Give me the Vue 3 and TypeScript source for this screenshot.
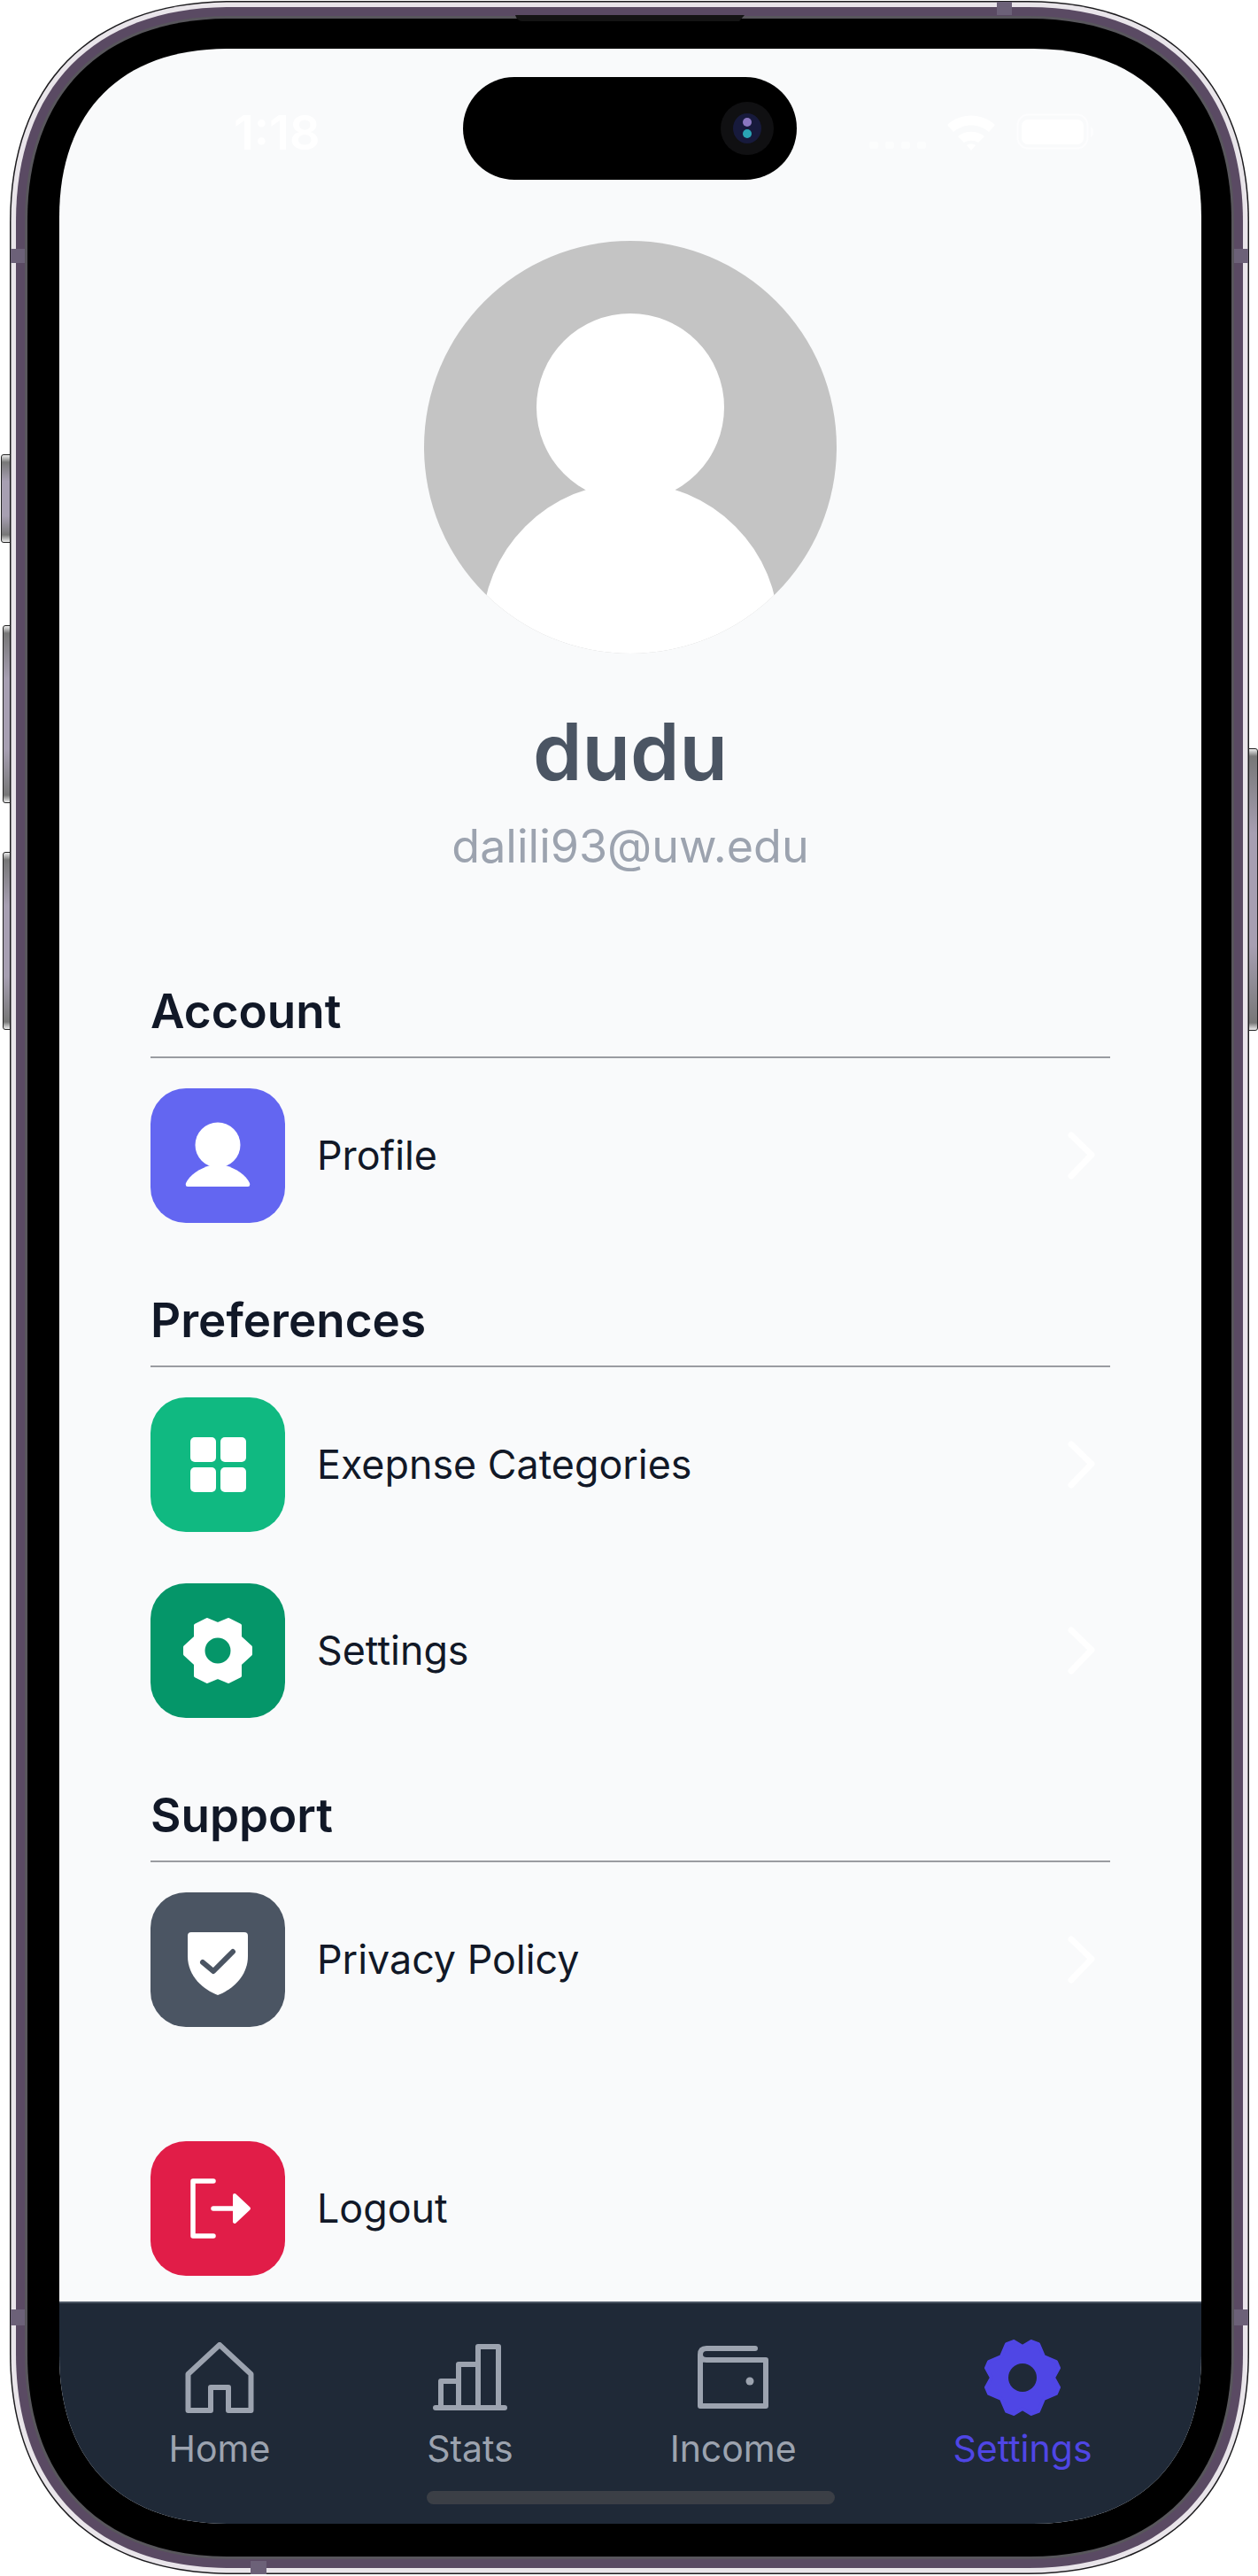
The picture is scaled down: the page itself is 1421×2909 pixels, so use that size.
<script setup lang="ts">
// corner with a continuous curve, e = how far the corner reaches along each edge
function squircle(x: number, y: number, w: number, h: number, e: number): string {
  const c = e * 0.37
  const r = x + w
  const b = y + h
  return [
    `M${x + e} ${y}`,
    `H${r - e}`,
    `C${r - c} ${y} ${r} ${y + c} ${r} ${y + e}`,
    `V${b - e}`,
    `C${r} ${b - c} ${r - c} ${b} ${r - e} ${b}`,
    `H${x + e}`,
    `C${x + c} ${b} ${x} ${b - c} ${x} ${b - e}`,
    `V${y + e}`,
    `C${x} ${y + c} ${x + c} ${y} ${x + e} ${y}`,
    'Z'
  ].join(' ')
}

function ring(inset: number): string {
  return squircle(11 + inset, 1 + inset, 1400 - inset * 2, 2906 - inset * 2, 250 - inset * 1.09)
}

const rings = [
  { inset: 0, fill: '#1b1a1d' },
  { inset: 1.5, fill: '#e9e5ea' },
  { inset: 7, fill: '#5a4a63' },
  { inset: 17, fill: '#58565c' },
  { inset: 20, fill: '#000000' }
]

const bands = [
  { x: 1126, y: 2, w: 17, h: 15 },
  { x: 12, y: 281, w: 16, h: 16 },
  { x: 1394, y: 281, w: 16, h: 16 },
  { x: 283, y: 2892, w: 18, h: 15 },
  { x: 12, y: 2608, w: 16, h: 18 },
  { x: 1394, y: 2608, w: 16, h: 18 }
]

const screenClip = { clipPath: `path('${squircle(0, 0, 1290, 2795, 190)}')` }
</script>

<template>
  <div class="device">
    <span class="side-btn action"></span>
    <span class="side-btn vol-up"></span>
    <span class="side-btn vol-down"></span>
    <span class="side-btn power"></span>

    <svg class="frame" width="1421" height="2909" viewBox="0 0 1421 2909">
      <path v-for="r in rings" :key="r.inset" :d="ring(r.inset)" :fill="r.fill" />
      <rect v-for="b in bands" :key="b.x + '-' + b.y" :x="b.x" :y="b.y" :width="b.w" :height="b.h" fill="#6c6178" />
      <path d="M582 17H841L835 24H590Q584 24 582 17Z" fill="#141414" />
    </svg>

    <div class="screen" :style="screenClip">
      <div class="status-bar">
        <span class="time">1:18</span>
        <div class="status-icons">
          <svg class="cells" width="64" height="42" viewBox="0 0 64 42" fill="#fcfdfd">
            <rect x="0" y="32" width="10" height="8" rx="3" />
            <rect x="18" y="32" width="10" height="8" rx="3" />
            <rect x="36" y="32" width="10" height="8" rx="3" />
            <rect x="54" y="32" width="10" height="8" rx="3" />
          </svg>
          <svg class="wifi" width="58" height="42" viewBox="0 0 58 42">
            <path d="M2 13C17 -1 41 -1 56 13L49 21C38 11 20 11 9 21Z" fill="#fff" />
            <path d="M14 26C22 19 36 19 44 26L37 33C33 30 25 30 21 33Z" fill="#fff" />
            <path d="M24 36C27 34 31 34 34 36L29 42Z" fill="#fff" />
          </svg>
          <svg class="battery" width="88" height="42" viewBox="0 0 88 42">
            <rect x="1.5" y="1.5" width="79" height="38" rx="12" fill="none" stroke="#fdfdfe" stroke-width="2" />
            <rect x="6" y="7" width="70" height="28" rx="7" fill="#fff" />
            <path d="M84 15Q87 17 87 21Q87 25 84 27Z" fill="#fdfdfe" />
          </svg>
        </div>
      </div>

      <div class="island">
        <span class="lens">
          <span class="lens-inner">
            <i class="dot top"></i>
            <i class="dot low"></i>
          </span>
        </span>
      </div>

      <main class="content">
        <section class="hero">
          <svg class="avatar" width="466" height="466" viewBox="0 0 466 466">
            <defs>
              <clipPath id="avatar-clip"><circle cx="233" cy="233" r="233" /></clipPath>
            </defs>
            <g clip-path="url(#avatar-clip)">
              <rect width="466" height="466" fill="#c4c4c4" />
              <circle cx="233" cy="188" r="106" fill="#fff" />
              <circle cx="233" cy="441" r="167.700" fill="#fff" />
            </g>
          </svg>
          <h1 class="name">dudu</h1>
          <p class="email">dalili93@uw.edu</p>
        </section>

        <section class="group">
          <h2 class="group-title">Account</h2>
          <div class="row">
            <span class="tile indigo">
              <svg viewBox="0 0 152 152" width="152" height="152">
                <circle cx="76" cy="64" r="25.5" fill="#fff" />
                <path d="M40 107C44 98 56 90 68 87H84C96 90 108 98 112 107Q113 111 110 111H42Q39 111 40 107Z" fill="#fff" />
              </svg>
            </span>
            <span class="label">Profile</span>
            <svg class="chevron" width="34" height="60" viewBox="0 0 34 60"><path d="M6 7L29 29L6 53" /></svg>
          </div>
        </section>

        <section class="group">
          <h2 class="group-title">Preferences</h2>
          <div class="row">
            <span class="tile emerald">
              <svg viewBox="0 0 152 152" width="152" height="152" fill="#fff">
                <rect x="45" y="45" width="29" height="28" rx="5" />
                <rect x="79" y="45" width="29" height="28" rx="5" />
                <rect x="45" y="79" width="29" height="28" rx="5" />
                <rect x="79" y="79" width="29" height="28" rx="5" />
              </svg>
            </span>
            <span class="label">Exepnse Categories</span>
            <svg class="chevron" width="34" height="60" viewBox="0 0 34 60"><path d="M6 7L29 29L6 53" /></svg>
          </div>
          <div class="row">
            <span class="tile green">
              <svg viewBox="0 0 152 152" width="152" height="152">
                <path d="M76 46L88 41L101 47.500V61L113 72V80L101 91V104.500L88 111L76 106L64 111L51 104.500V91L39 80V72L51 61V47.500L64 41Z" fill="#fff" stroke="#fff" stroke-width="4" stroke-linejoin="round" />
                <circle cx="76" cy="76" r="14.5" fill="#059669" />
              </svg>
            </span>
            <span class="label">Settings</span>
            <svg class="chevron" width="34" height="60" viewBox="0 0 34 60"><path d="M6 7L29 29L6 53" /></svg>
          </div>
        </section>

        <section class="group">
          <h2 class="group-title">Support</h2>
          <div class="row">
            <span class="tile slate">
              <svg viewBox="0 0 152 152" width="152" height="152">
                <path d="M46 45H106Q110 45 110 49V72C110 95 92 110 76 116C60 110 42 95 42 72V49Q42 45 46 45Z" fill="#fff" />
                <path d="M59 79L71 89L93 67" fill="none" stroke="#4b5563" stroke-width="6" stroke-linecap="round" stroke-linejoin="round" />
              </svg>
            </span>
            <span class="label">Privacy Policy</span>
            <svg class="chevron" width="34" height="60" viewBox="0 0 34 60"><path d="M6 7L29 29L6 53" /></svg>
          </div>
        </section>

        <div class="row logout">
          <span class="tile rose">
            <svg viewBox="0 0 152 152" width="152" height="152">
              <path d="M71 45H48V107H71" fill="none" stroke="#fff" stroke-width="5.5" stroke-linecap="round" stroke-linejoin="round" />
              <path d="M71 76H95" fill="none" stroke="#fff" stroke-width="5.5" stroke-linecap="round" />
              <path d="M95 61L111 76L95 91Z" fill="#fff" stroke="#fff" stroke-width="4" stroke-linejoin="round" />
            </svg>
          </span>
          <span class="label">Logout</span>
        </div>
      </main>

      <nav class="tabs">
        <div class="tab">
          <span class="tab-icon">
            <svg width="78" height="80" viewBox="0 0 78 80">
              <path d="M39 3L74.500 36V77H49V51H29V77H3.500V36Z" />
            </svg>
          </span>
          <span class="tab-label">Home</span>
        </div>
        <div class="tab">
          <span class="tab-icon">
            <svg width="84" height="76" viewBox="0 0 84 76">
              <path d="M9 71V42H29V71M29 42V23H51V71M51 23V3H74V71" />
              <path d="M3 72H81" />
            </svg>
          </span>
          <span class="tab-label">Stats</span>
        </div>
        <div class="tab">
          <span class="tab-icon">
            <svg width="80" height="72" viewBox="0 0 80 72">
              <path d="M65 3H10Q3 3 3 10Q3 16 10 16H77V68H3V10" />
              <circle class="filled" cx="59" cy="40" r="4.500" />
            </svg>
          </span>
          <span class="tab-label">Income</span>
        </div>
        <div class="tab active">
          <span class="tab-icon">
            <svg width="86" height="86" viewBox="-43 -43 86 86">
              <path class="cog" d="M0 -35L10 -41L18 -38L24 -24L38 -18L41 -11L35 0L41 11L38 18L24 24L18 38L10 41L0 35L-10 41L-18 38L-24 24L-38 18L-41 11L-35 0L-41 -11L-38 -18L-24 -24L-18 -38L-10 -41Z" />
              <circle class="cog-hole" r="16" />
            </svg>
          </span>
          <span class="tab-label">Settings</span>
        </div>
      </nav>
      <span class="home-bar"></span>
    </div>
  </div>
</template>

<style scoped>
.device {
  position: relative;
  width: 1421px;
  height: 2909px;
  box-sizing: border-box;
  padding: 55px 64px 59px 67px;
  background: #fff;
  font-family: Inter, "Liberation Sans", sans-serif;
}

.frame {
  position: absolute;
  left: 0;
  top: 0;
}

.side-btn {
  position: absolute;
  box-sizing: border-box;
  border: 1px solid #222;
  background: linear-gradient(#eee 0, #777 8px, #a79fb2 30%, #a79fb2 70%, #777 calc(100% - 8px), #eee 100%);
}
.action { left: 1px; top: 513px; width: 12px; height: 100px; border-radius: 3px 0 0 3px; }
.vol-up { left: 3px; top: 706px; width: 10px; height: 201px; border-radius: 3px 0 0 3px; }
.vol-down { left: 3px; top: 962px; width: 10px; height: 201px; border-radius: 3px 0 0 3px; }
.power { left: 1410px; top: 845px; width: 11px; height: 319px; border-radius: 0 3px 3px 0; }

.screen {
  position: relative;
  display: flex;
  flex-direction: column;
  width: 1290px;
  height: 2795px;
  background: #f9fafb;
  overflow: hidden;
}

.status-bar {
  position: absolute;
  top: 0;
  left: 0;
  right: 0;
  height: 130px;
}
.time {
  position: absolute;
  left: 197px;
  top: 65px;
  font-size: 54px;
  line-height: 60px;
  font-weight: 600;
  color: #fff;
}
.status-icons {
  position: absolute;
  left: 915px;
  top: 73px;
  display: flex;
  gap: 22px;
}

.island {
  position: absolute;
  left: 456px;
  top: 32px;
  width: 377px;
  height: 116px;
  border-radius: 58px;
  background: #000;
}
.lens {
  position: absolute;
  left: 291px;
  top: 28px;
  display: flex;
  align-items: center;
  justify-content: center;
  width: 60px;
  height: 60px;
  border-radius: 50%;
  background: #101012;
}
.lens-inner {
  position: relative;
  width: 32px;
  height: 34px;
  border-radius: 50%;
  background: #171a3c;
}
.dot {
  position: absolute;
  left: 11px;
  width: 10px;
  height: 10px;
  border-radius: 50%;
}
.dot.top { top: 5px; background: #8a76c0; }
.dot.low { top: 18px; background: #2aa5b5; }

.content {
  flex: 1;
  display: flex;
  flex-direction: column;
  padding: 217px 103px 0;
}

.hero {
  display: flex;
  flex-direction: column;
  align-items: center;
}
.avatar { display: block; }
.name {
  margin: 58px 0 0;
  font-size: 89px;
  line-height: 106px;
  font-weight: 600;
  color: #4b5563;
}
.email {
  margin: 22px 0 0;
  font-size: 52px;
  line-height: 64px;
  color: #9ca3af;
}

.group { display: flex; flex-direction: column; gap: 58px; margin-top: 120px; }
.group + .group { margin-top: 76px; }
.group-title {
  margin: 0 0 -24px;
  padding-bottom: 17px;
  border-bottom: 2px solid #9a9ca1;
  font-size: 53px;
  line-height: 68px;
  font-weight: 600;
  color: #111827;
}

.row {
  display: flex;
  align-items: center;
  gap: 36px;
  height: 152px;
}
.logout { margin-top: 129px; }
.tile {
  flex: none;
  width: 152px;
  height: 152px;
  border-radius: 40px;
}
.tile svg { display: block; }
.indigo { background: #6366f1; }
.emerald { background: #10b981; }
.green { background: #059669; }
.slate { background: #4b5563; }
.rose { background: #e11d48; }
.label {
  flex: 1;
  font-size: 44.8px;
  color: #111827;
}
.chevron {
  margin-right: 16px;
  fill: none;
  stroke: #fff;
  stroke-width: 7;
  stroke-linecap: round;
  stroke-linejoin: round;
}

.tabs {
  display: flex;
  justify-content: space-around;
  height: 251px;
  box-sizing: border-box;
  padding: 41px 35px 0;
  border-top: 2px solid #4b5563;
  background: #1f2937;
}
.tab {
  display: flex;
  flex-direction: column;
  align-items: center;
  color: #9ca3af;
}
.tab.active { color: #4f46e5; }
.tab-icon {
  display: flex;
  align-items: center;
  justify-content: center;
  height: 86px;
}
.tab-icon svg {
  fill: none;
  stroke: currentColor;
  stroke-width: 6;
  stroke-linecap: round;
  stroke-linejoin: round;
}
.tab-icon .filled { fill: currentColor; stroke: none; }
.tab-icon .cog { fill: currentColor; stroke-width: 4; }
.tab-icon .cog-hole { fill: #1f2937; stroke: none; }
.tab-label {
  margin-top: 13px;
  font-size: 41px;
  line-height: 48px;
}

.home-bar {
  position: absolute;
  left: 415px;
  top: 2758px;
  width: 461px;
  height: 15px;
  border-radius: 8px;
  background: #3b3f46;
}
</style>
